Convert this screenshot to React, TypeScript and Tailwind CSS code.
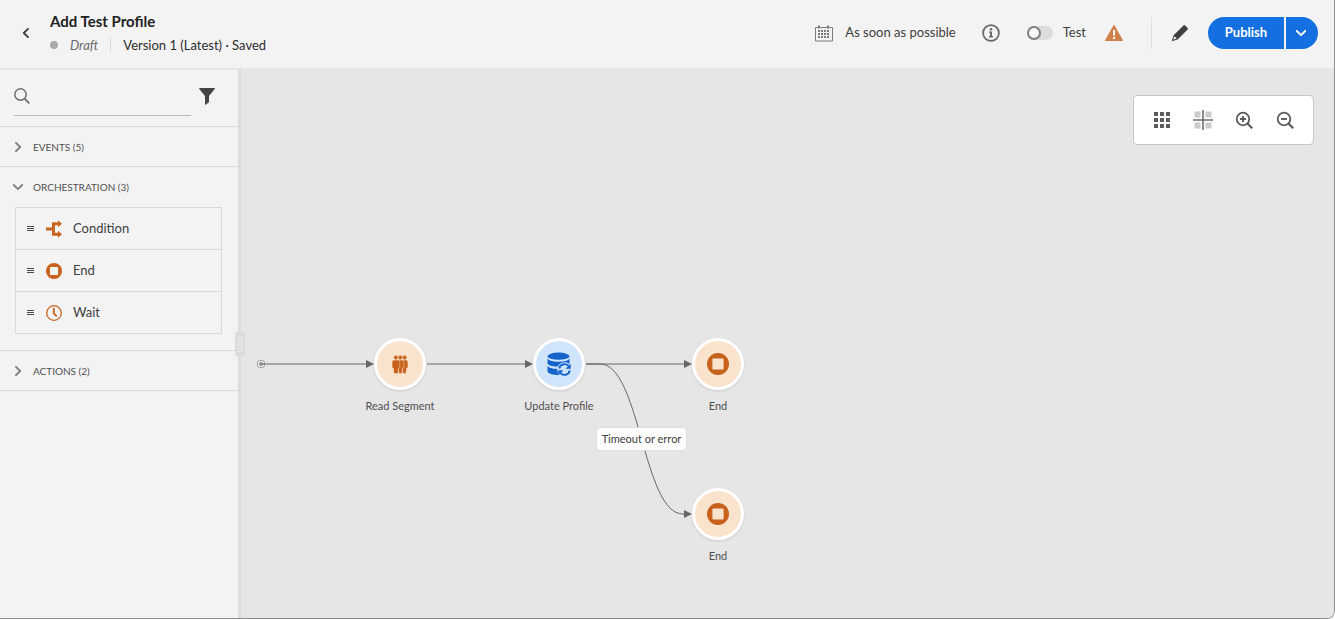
import { useState } from "react";
import type { ReactNode } from "react";

function ChevronIcon({ className }: { className: string }) {
  return (
    <svg viewBox="0 0 10 10" className={className} fill="none" stroke="currentColor" strokeWidth="1.9" aria-hidden="true">
      <path d="M3 0.8 7.2 5 3 9.2" strokeLinecap="round" strokeLinejoin="round" />
    </svg>
  );
}

function CalendarIcon() {
  return (
    <svg viewBox="0 0 18 17" className="h-[17px] w-[18px]" aria-hidden="true">
      <path d="M0.5 2.5h17v13.500h-17z" fill="none" stroke="#7a7a7a" />
      <path d="M4 0.500v3M13 0.500v3" stroke="#7a7a7a" strokeWidth="2" />
      <path
        d="M6 5h2v2H6zM9 5h2v2H9zM12 5h2v2h-2zM3 5h2v2H3zM3 8h2v2H3zM6 8h2v2H6zM9 8h2v2H9zM12 8h2v2h-2zM3 11h2v2H3zM6 11h2v2H6zM9 11h2v2H9zM12 11h2v2h-2z"
        fill="#7a7a7a"
      />
    </svg>
  );
}

function InfoIcon() {
  return (
    <svg viewBox="0 0 18 18" className="size-[18px]" aria-hidden="true">
      <circle cx="9" cy="9" r="7.9" fill="none" stroke="#6a6a6a" strokeWidth="1.8" />
      <circle cx="9" cy="5.2" r="1.3" fill="#6a6a6a" />
      <path d="M7 7.5h3v4.6h1v1.3H7v-1.3h1V8.8H7z" fill="#6a6a6a" />
    </svg>
  );
}

function WarningIcon() {
  return (
    <svg viewBox="0 0 18 16" className="h-4 w-[18px]" role="img" aria-label="Warning">
      <path d="M8.4 0.4a.7.7 0 0 1 1.2 0l8.2 14.7a.6.6 0 0 1-.5.9H.7a.6.6 0 0 1-.5-.9z" fill="#cf804b" />
      <path d="M8 5h2v5.5H8zM8 12h2v2H8z" fill="#fff" />
    </svg>
  );
}

function PencilIcon() {
  return (
    <svg viewBox="0 0 16 16" className="size-4" aria-hidden="true">
      <path
        d="M11.500.4a1.200 1.200 0 0 1 1.600 0l2.500 2.500a1.200 1.200 0 0 1 0 1.600L5.600 14.400.5 16a.4.400 0 0 1-.5-.5L1.600 10.300z"
        fill="#3f3f3f"
      />
      <path d="M2.400 11.200 4.800 13.600 1.900 14.600 1.400 14.100z" fill="#f3f3f3" />
    </svg>
  );
}

function SearchIcon() {
  return (
    <svg viewBox="0 0 16 16" className="size-4" fill="none" stroke="#6e6e6e" aria-hidden="true">
      <circle cx="6.5" cy="6.5" r="5.700" strokeWidth="1.500" />
      <path d="M10.600 10.600 15.300 15.300" strokeWidth="1.900" />
    </svg>
  );
}

function FunnelIcon() {
  return (
    <svg viewBox="0 0 16 17" className="h-[17px] w-4" aria-hidden="true">
      <path d="M.8 0h14.400a.6.6 0 0 1 .5 1L10 8v6.300L6.600 16.700a.4.4 0 0 1-.6-.3V8L.3 1a.6.600 0 0 1 .5-1z" fill="#444" />
    </svg>
  );
}

function GridIcon() {
  return (
    <svg viewBox="0 0 16 16" className="size-4" fill="#5c5c5c" aria-hidden="true">
      <path d="M0 0h4v4H0zM6 0h4v4H6zM12 0h4v4h-4zM0 6h4v4H0zM6 6h4v4H6zM12 6h4v4h-4zM0 12h4v4H0zM6 12h4v4H6zM12 12h4v4h-4z" />
    </svg>
  );
}

function AlignIcon() {
  return (
    <svg viewBox="0 0 20 20" className="size-5" aria-hidden="true">
      <path d="M1.500 1.500h6v6h-6zM12.500 1.500h6v6h-6zM1.500 12.500h6v6h-6zM12.500 12.500h6v6h-6z" fill="#cbcbcb" />
      <path d="M0 10h20M10 0v20" stroke="#6e6e6e" strokeWidth="1.600" />
    </svg>
  );
}

function ZoomIcon({ plus }: { plus: boolean }) {
  return (
    <svg viewBox="0 0 18 18" className="size-[18px]" fill="none" stroke="#5c5c5c" aria-hidden="true">
      <circle cx="8" cy="8" r="6.300" strokeWidth="1.800" />
      <path d="M12.500 12.500 17.200 17.200" strokeWidth="2.200" />
      <path d={plus ? "M5 8h6M8 5v6" : "M5 8h6"} strokeWidth="1.900" />
    </svg>
  );
}

function ConditionIcon() {
  return (
    <svg viewBox="0 0 16 18" className="h-[18px] w-4" aria-hidden="true">
      <path d="M0 9h7.500M13 3.800H7.500v10.400H13" fill="none" stroke="#c8651f" strokeWidth="3" />
      <path d="M12 .3 16 3.800 12 7.300zM12 10.700 16 14.200 12 17.700z" fill="#c8651f" />
    </svg>
  );
}

function EndIcon({ className }: { className: string }) {
  return (
    <svg viewBox="0 0 22 22" className={className} aria-hidden="true">
      <path fillRule="evenodd" fill="#c8611b" d="M11 0a11 11 0 1 1 0 22 11 11 0 0 1 0-22zM6.400 5.400a1 1 0 0 0-1 1v9.200a1 1 0 0 0 1 1h9.200a1 1 0 0 0 1-1V6.400a1 1 0 0 0-1-1z" />
    </svg>
  );
}

function WaitIcon() {
  return (
    <svg viewBox="0 0 16 16" className="size-4" fill="none" stroke="#c8651f" aria-hidden="true">
      <circle cx="8" cy="8" r="7.300" strokeWidth="1.300" />
      <path d="M7.800 2.800V8.300L10.800 11.400" strokeWidth="1.900" />
    </svg>
  );
}

function PeopleIcon() {
  return (
    <svg viewBox="0 0 16 19" className="h-[19px] w-4" aria-hidden="true">
      <g fill="#c8611b" stroke="#fae3cd" strokeWidth="0.500">
        <path d="M9.800 5h4a2.100 2.100 0 0 1 2.100 2.100v5.100a.9.900 0 0 1-1.300.8L14 18.600h-3.200z" />
        <circle cx="12.600" cy="2.500" r="2.200" />
        <path d="M5.600 5h4.200a2.100 2.100 0 0 1 2.100 2.100v5.100a.9.900 0 0 1-1.300.8L10 18.600H6.800z" />
        <circle cx="8.300" cy="2.500" r="2.200" />
        <path d="M2 5h3.800a2 2 0 0 1 2 2v5.400a.8.800 0 0 1-1.200.7L6 18.600H1.900L1.400 13a.8.800 0 0 1-1.300-.7V7a2 2 0 0 1 1.900-2z" />
        <circle cx="3.900" cy="2.500" r="2.200" />
      </g>
    </svg>
  );
}

function DatabaseSyncIcon() {
  return (
    <svg viewBox="0 0 24 24" className="size-6" aria-hidden="true">
      <g fill="#1464cc">
        <ellipse cx="11.500" cy="4.200" rx="11" ry="3.600" />
        <path d="M.5 6.500c2 2.700 6.500 3.200 11 3.200s9-.5 11-3.200v5c-3 2.500-6.500 3-11 3s-9-.5-11-2.800z" />
        <path d="M.5 14c2 2.300 6.500 3 11 3v6c-5 0-9.500-1-11-3.200z" />
      </g>
      <circle cx="17.500" cy="17.500" r="7.300" fill="#d0e5fb" />
      <g fill="none" stroke="#1464cc" strokeWidth="1.900">
        <path d="M12.200 16.500a5.400 5.400 0 0 1 9.600-2.200" />
        <path d="M22.800 18.500a5.400 5.400 0 0 1-9.600 2.200" />
      </g>
      <path d="M23.700 11.600v5.200h-5.200zM11.300 23.400v-5.200h5.200z" fill="#1464cc" />
    </svg>
  );
}

function GripIcon() {
  return (
    <svg viewBox="0 0 7 7" className="size-[7px]" fill="#4b4b4b" aria-hidden="true">
      <path d="M0 1h7v1H0zM0 3h7v1H0zM0 5h7v1H0z" />
    </svg>
  );
}

function PaletteGroup({ label, open, children }: { label: string; open?: boolean; children?: ReactNode }) {
  const [expanded, setExpanded] = useState(Boolean(open));
  return (
    <section className="border-b border-[#d9d9d9]">
      <button
        type="button"
        aria-expanded={expanded}
        onClick={() => setExpanded(!expanded)}
        className="flex h-[39px] w-full items-center gap-2.5 pt-px pl-[13px] text-left text-[10px] text-[#505050]"
      >
        <ChevronIcon className={expanded ? "size-2.5 rotate-90 text-[#808080]" : "size-2.5 text-[#808080]"} />
        {label}
      </button>
      {expanded && children}
    </section>
  );
}

function PaletteItem({ icon, label }: { icon: ReactNode; label: string }) {
  return (
    <li className="flex h-[42px] items-center border-b border-[#d9d9d9] pl-[11px] text-[13px] text-[#404040]">
      <GripIcon />
      <span className="ml-3 flex w-4 justify-center">{icon}</span>
      <span className="ml-[11px]">{label}</span>
    </li>
  );
}

function FlowNode({ place, tone, label, children }: { place: string; tone: string; label: string; children: ReactNode }) {
  return (
    <div className={`absolute flex w-32 flex-col items-center ${place}`}>
      <div className={`flex size-[52px] items-center justify-center rounded-full border-3 border-white shadow-sm ${tone}`}>
        {children}
      </div>
      <span className="mt-2 text-[11px] leading-4 text-[#505050]">{label}</span>
    </div>
  );
}

const toolButton = "flex size-6 items-center justify-center";

export default function App() {
  const [test, setTest] = useState(false);
  return (
    <div className="flex min-h-screen flex-col overflow-hidden rounded-br-lg border-r border-b border-[#8f8f8f] bg-[#f3f3f3] font-[Lato,sans-serif] text-[#2c2c2c]">
      <header className="flex h-[68px] items-center pr-4 pb-0.5 pl-4">
        <button type="button" aria-label="Back" className="flex size-5 items-center justify-center">
          <ChevronIcon className="size-2.5 rotate-180 text-[#404040]" />
        </button>
        <div className="ml-3.5">
          <h1 className="text-[15px] leading-6 font-bold text-[#222]">Add Test Profile</h1>
          <div className="flex items-center text-[13px] leading-6 whitespace-nowrap">
            <span className="size-2 rounded-full bg-[#aaa]" />
            <span className="ml-3 text-[#6a6a6a] italic">Draft</span>
            <span className="ml-3 h-4 w-px bg-[#dcdcdc]" />
            <span className="ml-3">Version 1 (Latest) · Saved</span>
          </div>
        </div>
        <div className="ml-auto flex items-center whitespace-nowrap">
          <CalendarIcon />
          <span className="ml-3 text-[13px] text-[#404040]">As soon as possible</span>
          <button type="button" aria-label="Information" className="ml-[26px]">
            <InfoIcon />
          </button>
          <label className="ml-[27px] flex items-center text-[13px] text-[#404040]">
            <input type="checkbox" role="switch" checked={test} onChange={() => setTest(!test)} className="peer sr-only" />
            <span className="flex h-3.5 w-[26px] rounded-full bg-[#dcdcdc] peer-checked:justify-end">
              <span className="size-3.5 rounded-full border-2 border-[#808080] bg-[#f8f8f8]" />
            </span>
            <span className="ml-2.5">Test</span>
          </label>
          <span className="ml-[19px]">
            <WarningIcon />
          </span>
          <span className="ml-7 h-8 w-px bg-[#e0e0e0]" />
          <button type="button" aria-label="Edit" className="ml-5">
            <PencilIcon />
          </button>
          <div className="ml-5 flex h-8 gap-0.5 text-white">
            <button type="button" className="w-[76px] rounded-l-full bg-[#146fe0] text-[13px] font-bold">
              Publish
            </button>
            <button type="button" aria-label="More publish options" className="flex w-8 items-center rounded-r-full bg-[#146fe0] pl-2.5">
              <ChevronIcon className="size-2.5 rotate-90" />
            </button>
          </div>
        </div>
      </header>

      <div className="flex flex-1">
        <aside className="relative w-[241px] shrink-0 border-t-2 border-r-3 border-t-[#e4e4e4] border-r-[#dcdcdc]">
          <div className="flex h-[57px] items-start border-b border-[#d9d9d9] pt-4 pl-3.5">
            <label className="flex h-[30px] w-[177px] items-start border-b border-[#b9b9b9] pt-0.5">
              <SearchIcon />
              <input type="search" aria-label="Search activities" className="ml-2 min-w-0 flex-1 text-[13px] outline-none" />
            </label>
            <button type="button" aria-label="Filter" className="ml-2 pt-0.5">
              <FunnelIcon />
            </button>
          </div>
          <PaletteGroup label="EVENTS (5)" />
          <PaletteGroup label="ORCHESTRATION (3)" open>
            <ul className="mt-px mr-4 mb-4 ml-[15px] border border-b-0 border-[#d9d9d9]">
              <PaletteItem icon={<ConditionIcon />} label="Condition" />
              <PaletteItem icon={<EndIcon className="size-4" />} label="End" />
              <PaletteItem icon={<WaitIcon />} label="Wait" />
            </ul>
          </PaletteGroup>
          <PaletteGroup label="ACTIONS (2)" />
          <button
            type="button"
            aria-label="Resize panel"
            className="absolute top-[262px] -right-[7px] z-10 flex h-6 w-2.5 items-center justify-center rounded-xs bg-[#dcdcdc]"
          >
            <span className="h-4 w-1 border border-[#e8e8e8]" />
          </button>
        </aside>

        <main className="relative flex-1 overflow-hidden bg-[#e6e6e6]">
          <svg className="absolute inset-0 size-full" fill="none" stroke="#666" aria-hidden="true">
            <rect x="16.500" y="292.500" width="7" height="7" rx="2" stroke="#a3a3a3" />
            <circle cx="20" cy="296" r="2" fill="#999" stroke="none" />
            <path d="M20 296H128M186 296H287M345 296H446" />
            <path d="M345 296H359C399 296 402 446 442 446H446" />
            <path d="M125 292v8l8-4zM284 292v8l8-4zM443 292v8l8-4zM443 442v8l8-4z" fill="#666" stroke="none" />
          </svg>
          <FlowNode place="left-[95px] top-[270px]" tone="bg-[#fae3cd]" label="Read Segment">
            <PeopleIcon />
          </FlowNode>
          <FlowNode place="left-[254px] top-[270px]" tone="bg-[#d0e5fb]" label="Update Profile">
            <DatabaseSyncIcon />
          </FlowNode>
          <FlowNode place="left-[413px] top-[270px]" tone="bg-[#fae3cd]" label="End">
            <EndIcon className="size-[22px]" />
          </FlowNode>
          <FlowNode place="left-[413px] top-[420px]" tone="bg-[#fae3cd]" label="End">
            <EndIcon className="size-[22px]" />
          </FlowNode>
          <span className="absolute top-[359px] left-[355px] flex h-6 w-[91px] items-center justify-center rounded-sm border border-[#dfdfdf] bg-[#fdfdfd] text-[11px] whitespace-nowrap text-[#404040]">
            Timeout or error
          </span>
          <div className="absolute top-[27px] right-5 flex h-[50px] items-center gap-[17px] rounded-sm border border-[#c6c6c6] bg-white px-4">
            <button type="button" aria-label="Show grid" className={toolButton}>
              <GridIcon />
            </button>
            <button type="button" aria-label="Align activities" className={toolButton}>
              <AlignIcon />
            </button>
            <button type="button" aria-label="Zoom in" className={toolButton}>
              <ZoomIcon plus />
            </button>
            <button type="button" aria-label="Zoom out" className={toolButton}>
              <ZoomIcon plus={false} />
            </button>
          </div>
        </main>
      </div>
    </div>
  );
}
